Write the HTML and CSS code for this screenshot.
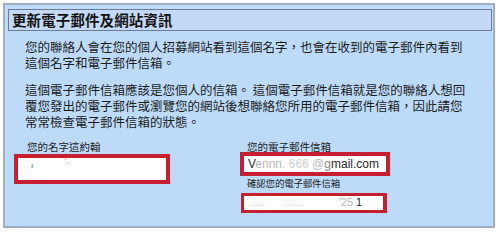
FILE: index.html
```html
<!DOCTYPE html>
<html lang="zh-Hant">
<head>
<meta charset="utf-8">
<title>更新電子郵件及網站資訊</title>
<link rel="stylesheet" href="styles.css">
</head>
<body>
<div class="panel">
  <div class="header">更新電子郵件及網站資訊</div>
  <p class="para para-first">您的聯絡人會在您的個人招募網站看到這個名字，也會在收到的電子郵件內看到<br>這個名字和電子郵件信箱。</p>
  <p class="para">這個電子郵件信箱應該是您個人的信箱。 這個電子郵件信箱就是您的聯絡人想回<br>覆您發出的電子郵件或瀏覽您的網站後想聯絡您所用的電子郵件信箱，因此請您<br>常常檢查電子郵件信箱的狀態。</p>
  <div class="fields">
    <div class="col col-left">
      <div class="label label-left">您的名字這約翰</div>
      <div class="box box-name"><span class="speck">ı</span><span class="speck speck2">‘</span><span class="speck speck3">՝</span></div>
    </div>
    <div class="col col-right">
      <div class="label">您的電子郵件信箱</div>
      <div class="box box-email"><span class="dark">V</span><span class="faint">ennn.</span> <span class="faint2">666</span> <span class="faint">@</span><span class="mid">g</span><span class="dark">mail.com</span></div>
      <div class="label label-confirm">確認您的電子郵件信箱</div>
      <div class="box box-confirm"><span class="faint2">.....</span><span class="gap"></span><span class="faint2">.......</span><span class="gap2"></span><span class="faint">'25</span> <span class="dark">1</span></div>
    </div>
  </div>
</div>
</body>
</html>
```
FILE: styles.css
```css
html, body {
  margin: 0;
  padding: 0;
  background: #ffffff;
}
body {
  width: 499px;
  height: 230px;
  overflow: hidden;
  font-family: "Noto Sans CJK TC", "Noto Sans", sans-serif;
  color: #1c1c1c;
}
.panel {
  margin: 3px 0 0 3px;
  width: 488px;
  height: 221px;
  border: 2px solid #a1afc2;
  background: #bddbf9;
}
.header {
  margin: 4px 1px 0 3px;
  height: 20px;
  border: 1px solid #6d7c96;
  background: #c4d9f5;
  font-size: 14.5px;
  font-weight: bold;
  line-height: 20px;
  padding-left: 3px;
  color: #141414;
  letter-spacing: 0.1px;
}
.para {
  margin: 11px 0 0 20px;
  font-size: 12.5px;
  line-height: 16px;
  white-space: nowrap;
}
.para-first {
  margin-top: 8px;
}
.fields {
  display: grid;
  grid-template-columns: 226px 1fr;
  margin: 10px 0 0 9px;
}
.label {
  font-size: 10.5px;
  line-height: 13px;
  padding-left: 7px;
  white-space: nowrap;
}
.label-left {
  padding-left: 13px;
}
.label-confirm {
  margin-top: 1px;
  font-size: 9.5px;
  letter-spacing: -0.2px;
}
.box {
  box-sizing: border-box;
  background: #ffffff;
  border: 4px solid #c61f30;
  white-space: nowrap;
  overflow: hidden;
  font-family: "Liberation Sans", Arial, sans-serif;
}
.box-name {
  margin-top: 1px;
  width: 156px;
  height: 30px;
  position: relative;
}
.speck {
  position: absolute;
  left: 13px;
  top: 3px;
  font-size: 8px;
  color: #555;
}
.speck2 {
  left: 47px;
  top: -2px;
  color: #c33;
}
.speck3 {
  left: 49px;
  top: 4px;
  color: #666;
}
.box-email {
  margin-top: -1px;
  width: 150px;
  height: 24px;
  font-size: 12px;
  line-height: 16px;
  padding-left: 4px;
}
.box-confirm {
  margin-top: 3px;
  margin-left: 1px;
  width: 146px;
  height: 20px;
  font-size: 11px;
  line-height: 12px;
  padding-left: 6px;
  border-width: 3px 4px 3px 3px;
}
.dark { color: #2a2a2a; }
.mid { color: #8a8a8a; }
.faint { color: #b9b9b9; }
.faint2 { color: #d2d2d2; }
.gap { display: inline-block; width: 18px; }
.gap2 { display: inline-block; width: 34px; }
```
